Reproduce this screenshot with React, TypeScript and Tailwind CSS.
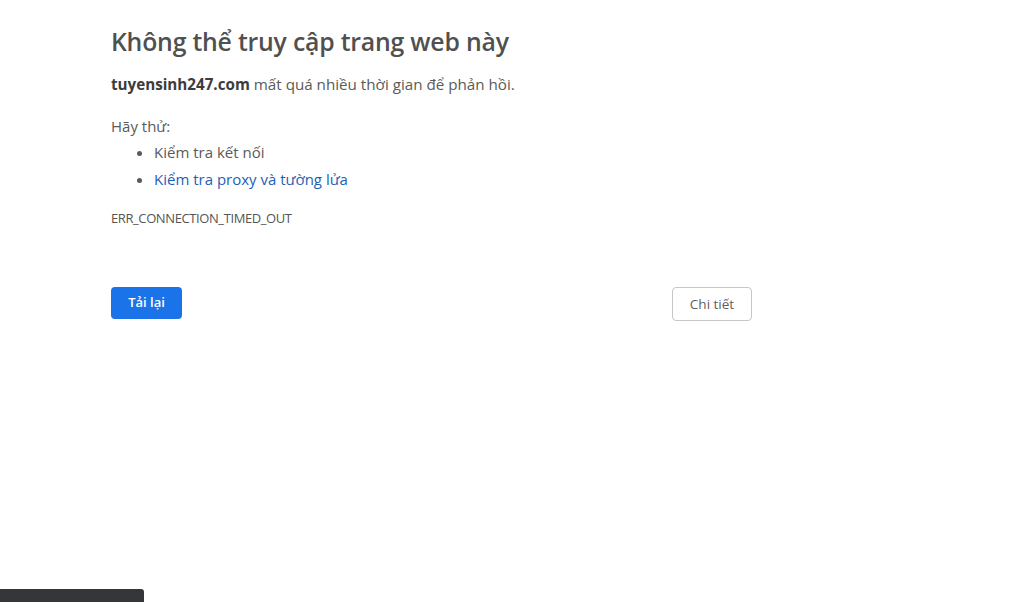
export default function App() {
  return (
    <div className="relative w-[1024px] h-[602px] bg-white overflow-hidden font-['Open_Sans',sans-serif]">
      <div className="w-[641px] ml-[111px] pt-[25px] flex flex-col">
        <h1 className="text-[24.8px] leading-[32px] font-semibold text-[#505050] tracking-[-0.2px]">
          Không thể truy cập trang web này
        </h1>
        <p className="mt-[15px] text-[15.2px] leading-[24px] text-[#5a5a5a]">
          <span className="font-bold text-[#3c3c3c]">tuyensinh247.com</span> mất quá nhiều thời gian để phản hồi.
        </p>
        <p className="mt-[20px] text-[15px] leading-[20px] text-[#5a5a5a]">Hãy thử:</p>
        <ul className="mt-[3px] pl-[43px] list-disc text-[15px] leading-[27px] text-[#5a5a5a] marker:text-[#5a5a5a]">
          <li>Kiểm tra kết nối</li>
          <li className="text-[#1e5fb4]">Kiểm tra proxy và tường lửa</li>
        </ul>
        <div className="mt-[17px] text-[13px] leading-[16px] text-[#555] tracking-[-0.4px]">ERR_CONNECTION_TIMED_OUT</div>
        <div className="mt-[61px] flex items-start justify-between">
          <button className="h-[32px] w-[71px] rounded-[4px] bg-[#1a73e8] text-white text-[13px] font-semibold">
            Tải lại
          </button>
          <button className="h-[34px] w-[80px] rounded-[4px] border border-[#c6c6c6] bg-white text-[#5f5f5f] text-[13.5px]">
            Chi tiết
          </button>
        </div>
      </div>
      <div className="absolute left-0 bottom-0 w-[144px] h-[13px] bg-[#35363a] rounded-tr-[3px]" />
    </div>
  );
}
